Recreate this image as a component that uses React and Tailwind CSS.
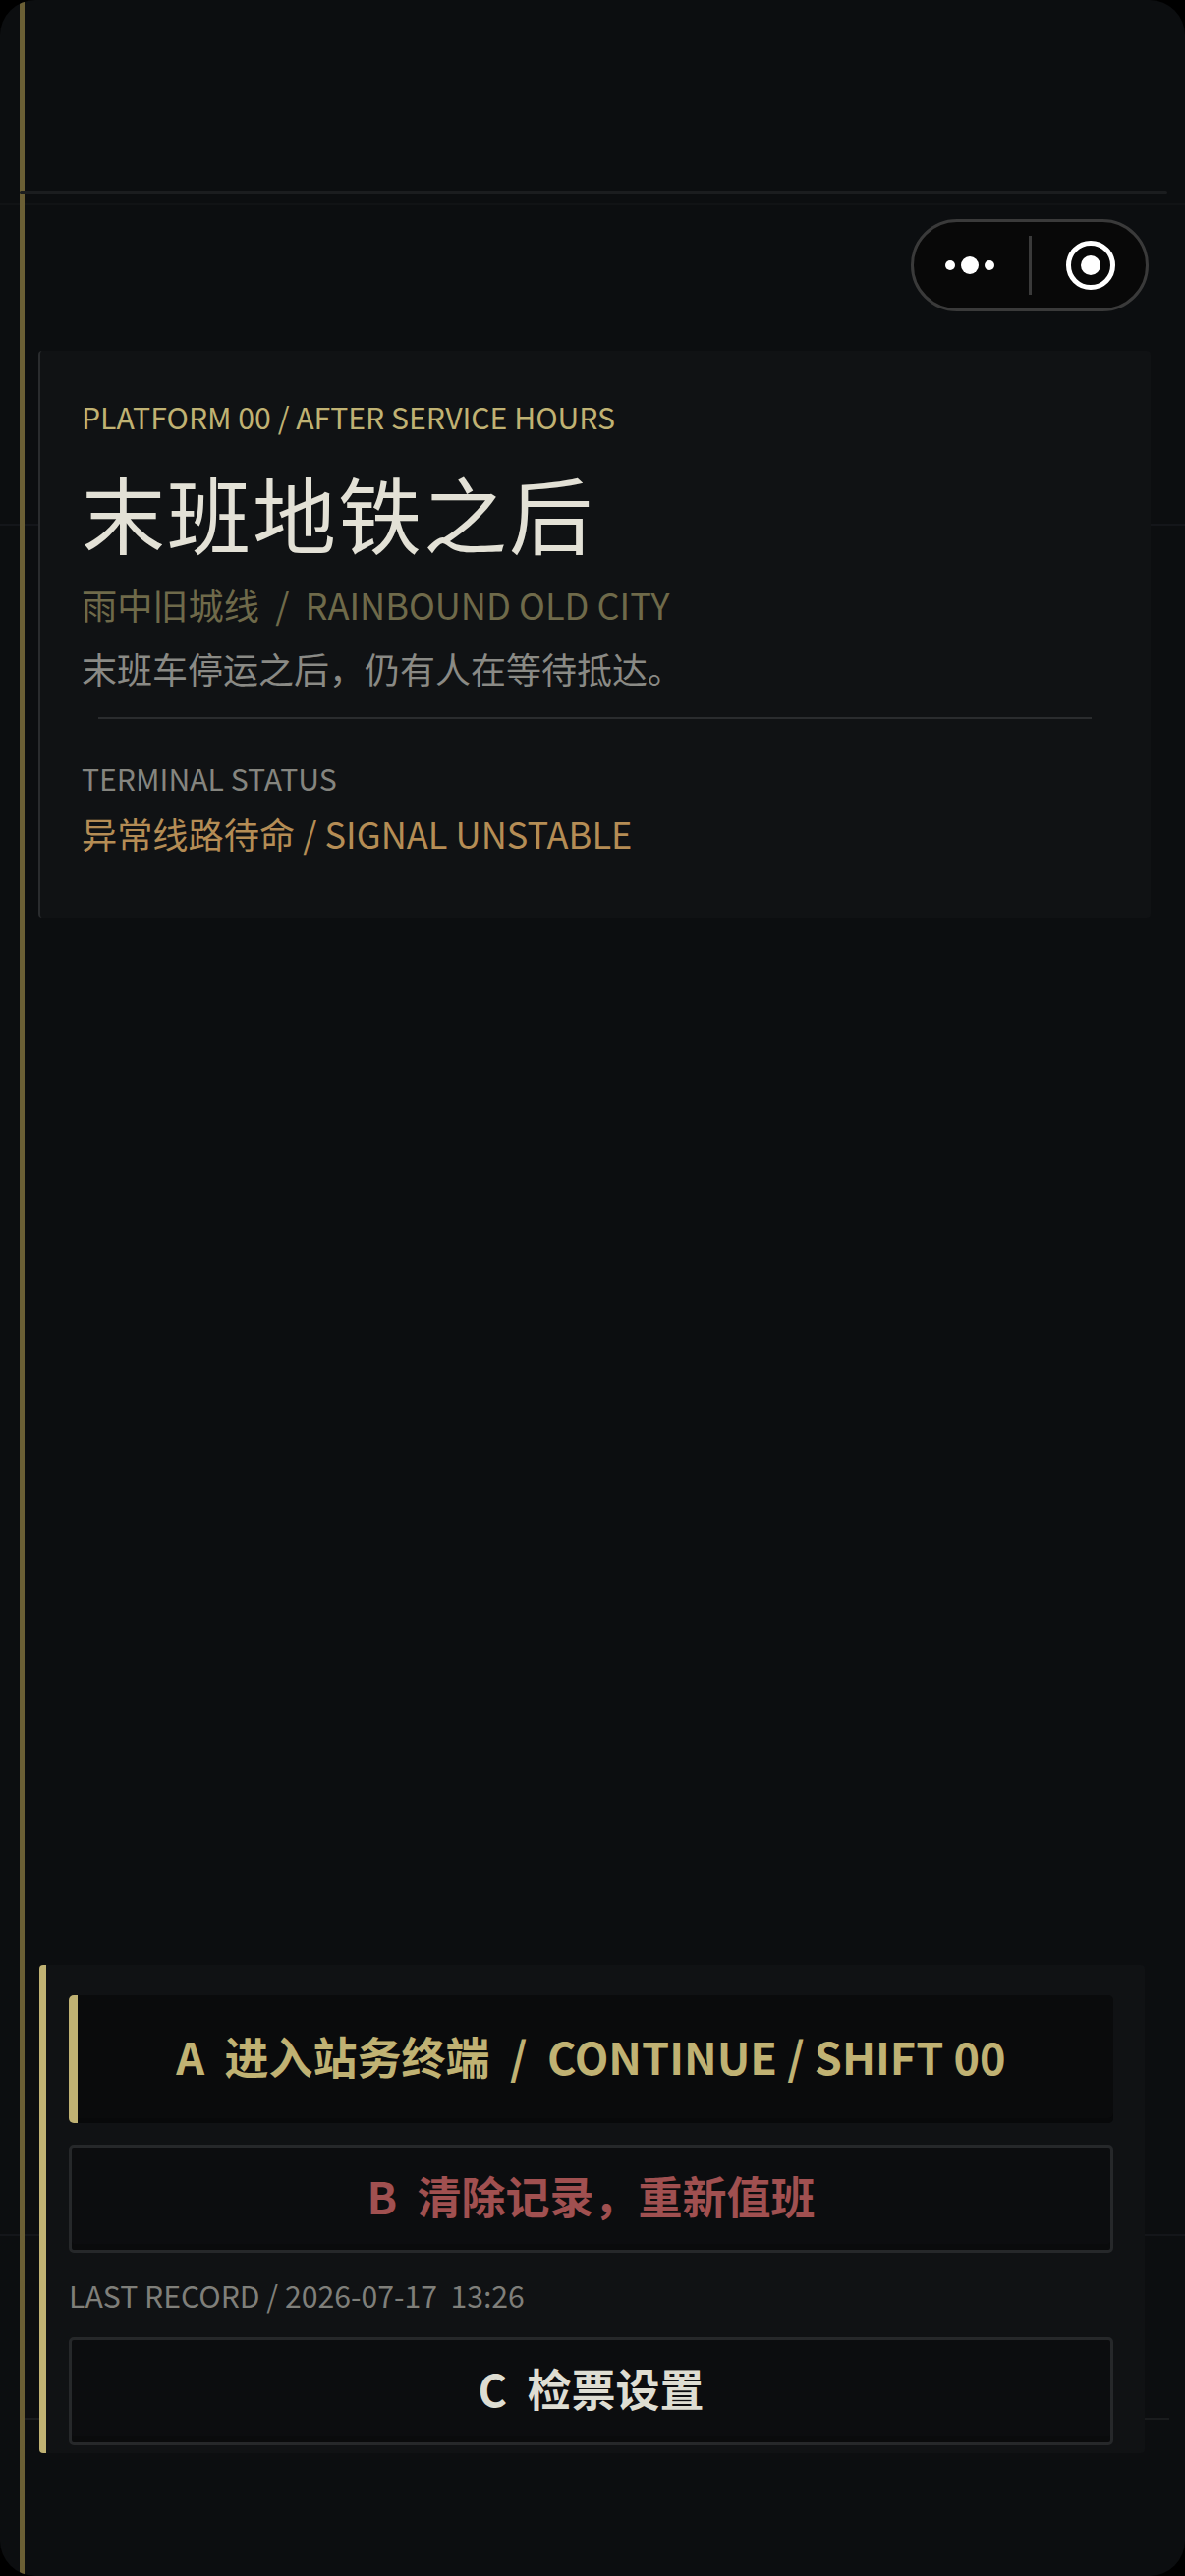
const font = { fontFamily: '"Noto Sans CJK SC", "Noto Sans", sans-serif' };

function MenuPill() {
  return (
    <div className="w-[242px] h-[94px] rounded-[47px] border-[3px] border-[#3a3a3a] bg-[#080808] flex items-center">
      <svg width="117" height="40" viewBox="0 0 117 40" className="shrink-0">
        <circle cx="37" cy="20" r="5" fill="#fff" />
        <circle cx="57" cy="20" r="9" fill="#fff" />
        <circle cx="77" cy="20" r="5" fill="#fff" />
      </svg>
      <div className="w-[3px] h-[60px] bg-[#3a3a3a] shrink-0" />
      <svg width="119" height="54" viewBox="0 0 119 54" className="shrink-0">
        <circle cx="60" cy="27" r="22.5" fill="none" stroke="#fff" strokeWidth="5" />
        <circle cx="60" cy="27" r="10" fill="#fff" />
      </svg>
    </div>
  );
}

function OutlineButton({ color, children }) {
  return (
    <button className={`w-full h-[110px] rounded-[5px] border-[3px] border-[#26282a] bg-[#0c0d0f] shadow-[inset_0_-6px_0_#0a0b0c] flex items-center justify-center pb-[6px] text-[45px] font-bold whitespace-pre ${color}`}>
      {children}
    </button>
  );
}

export default function App() {
  return (
    <div className="w-[1206px] h-[2622px] bg-black" style={font}>
      <div className="relative w-full h-full rounded-[36px] overflow-hidden bg-[#0c0e10] flex flex-col">
        {/* rails behind the cards */}
        <div className="absolute left-0 right-0 top-[207px] h-[2px] bg-[#111315]" />
        <div className="absolute left-0 right-0 top-[533px] h-[2px] bg-[#14161a]" />
        <div className="absolute left-0 right-0 top-[2274px] h-[2px] bg-[#14161a]" />
        <div className="absolute left-[20px] right-[16px] top-[2461px] h-[2px] bg-[#1a1c1e]" />
        <div className="absolute left-[20px] top-0 bottom-0 w-[5px] bg-[#6b5f35]" />

        <div className="relative h-[197px] shrink-0 pl-[20px] pr-[18px] flex items-end">
          <div className="w-full h-[3px] rounded-full bg-[#1b1d1f]" />
        </div>

        <div className="relative shrink-0 flex justify-end pr-[37px] pt-[26px]">
          <MenuPill />
        </div>

        <section className="relative shrink-0 ml-[39px] mr-[35px] mt-[40px] h-[577px] rounded-[4px] border-l-2 border-[#2a2c2e] bg-[#101214] pl-[42px] pt-[45px]">
          <p className="text-[30.2px] leading-[44px] text-[#c0b273] whitespace-pre">PLATFORM 00 / AFTER SERVICE HOURS</p>
          <h1 className="mt-[20px] text-[85px] leading-[110px] font-normal tracking-[2px] text-[#e3e1d6] whitespace-pre">末班地铁之后</h1>
          <p className="mt-[13px] text-[36.2px] leading-[52px] text-[#6f6a4a] whitespace-pre">雨中旧城线  /  RAINBOUND OLD CITY</p>
          <p className="mt-[14px] text-[36px] leading-[50px] text-[#8a8a85] whitespace-pre">末班车停运之后，仍有人在等待抵达。</p>
          <div className="ml-[17px] mr-[60px] mt-[25px] h-[2px] bg-[#2a2c2e]" />
          <p className="mt-[38px] text-[30.2px] leading-[44px] text-[#85857f] whitespace-pre">TERMINAL STATUS</p>
          <p className="mt-[8px] text-[36.2px] leading-[52px] text-[#b58d55] whitespace-pre">异常线路待命 / SIGNAL UNSTABLE</p>
        </section>

        <div className="flex-1" />

        <section className="relative shrink-0 ml-[40px] mr-[41px] mb-[125px] rounded-[4px] border-l-[7px] border-[#c0b273] bg-[#101214] pl-[23px] pr-[32px] pt-[31px] pb-[8px]">
          <button className="w-full h-[130px] rounded-[5px] border-l-[9px] border-[#c0b273] bg-[#0a0b0c] shadow-[inset_0_-5px_0_#08090a] flex items-center justify-center pr-[9px] pb-[6px] text-[45px] font-bold text-[#c0b273] whitespace-pre">
            A  进入站务终端  /  CONTINUE / SHIFT 00
          </button>
          <div className="mt-[22px]">
            <OutlineButton color="text-[#a05050]">B  清除记录，重新值班</OutlineButton>
          </div>
          <p className="mt-[22px] text-[30.2px] leading-[42px] text-[#7f7f7a] whitespace-pre">LAST RECORD / 2026-07-17  13:26</p>
          <div className="mt-[22px]">
            <OutlineButton color="text-[#deddd2]">C  检票设置</OutlineButton>
          </div>
        </section>
      </div>
    </div>
  );
}
